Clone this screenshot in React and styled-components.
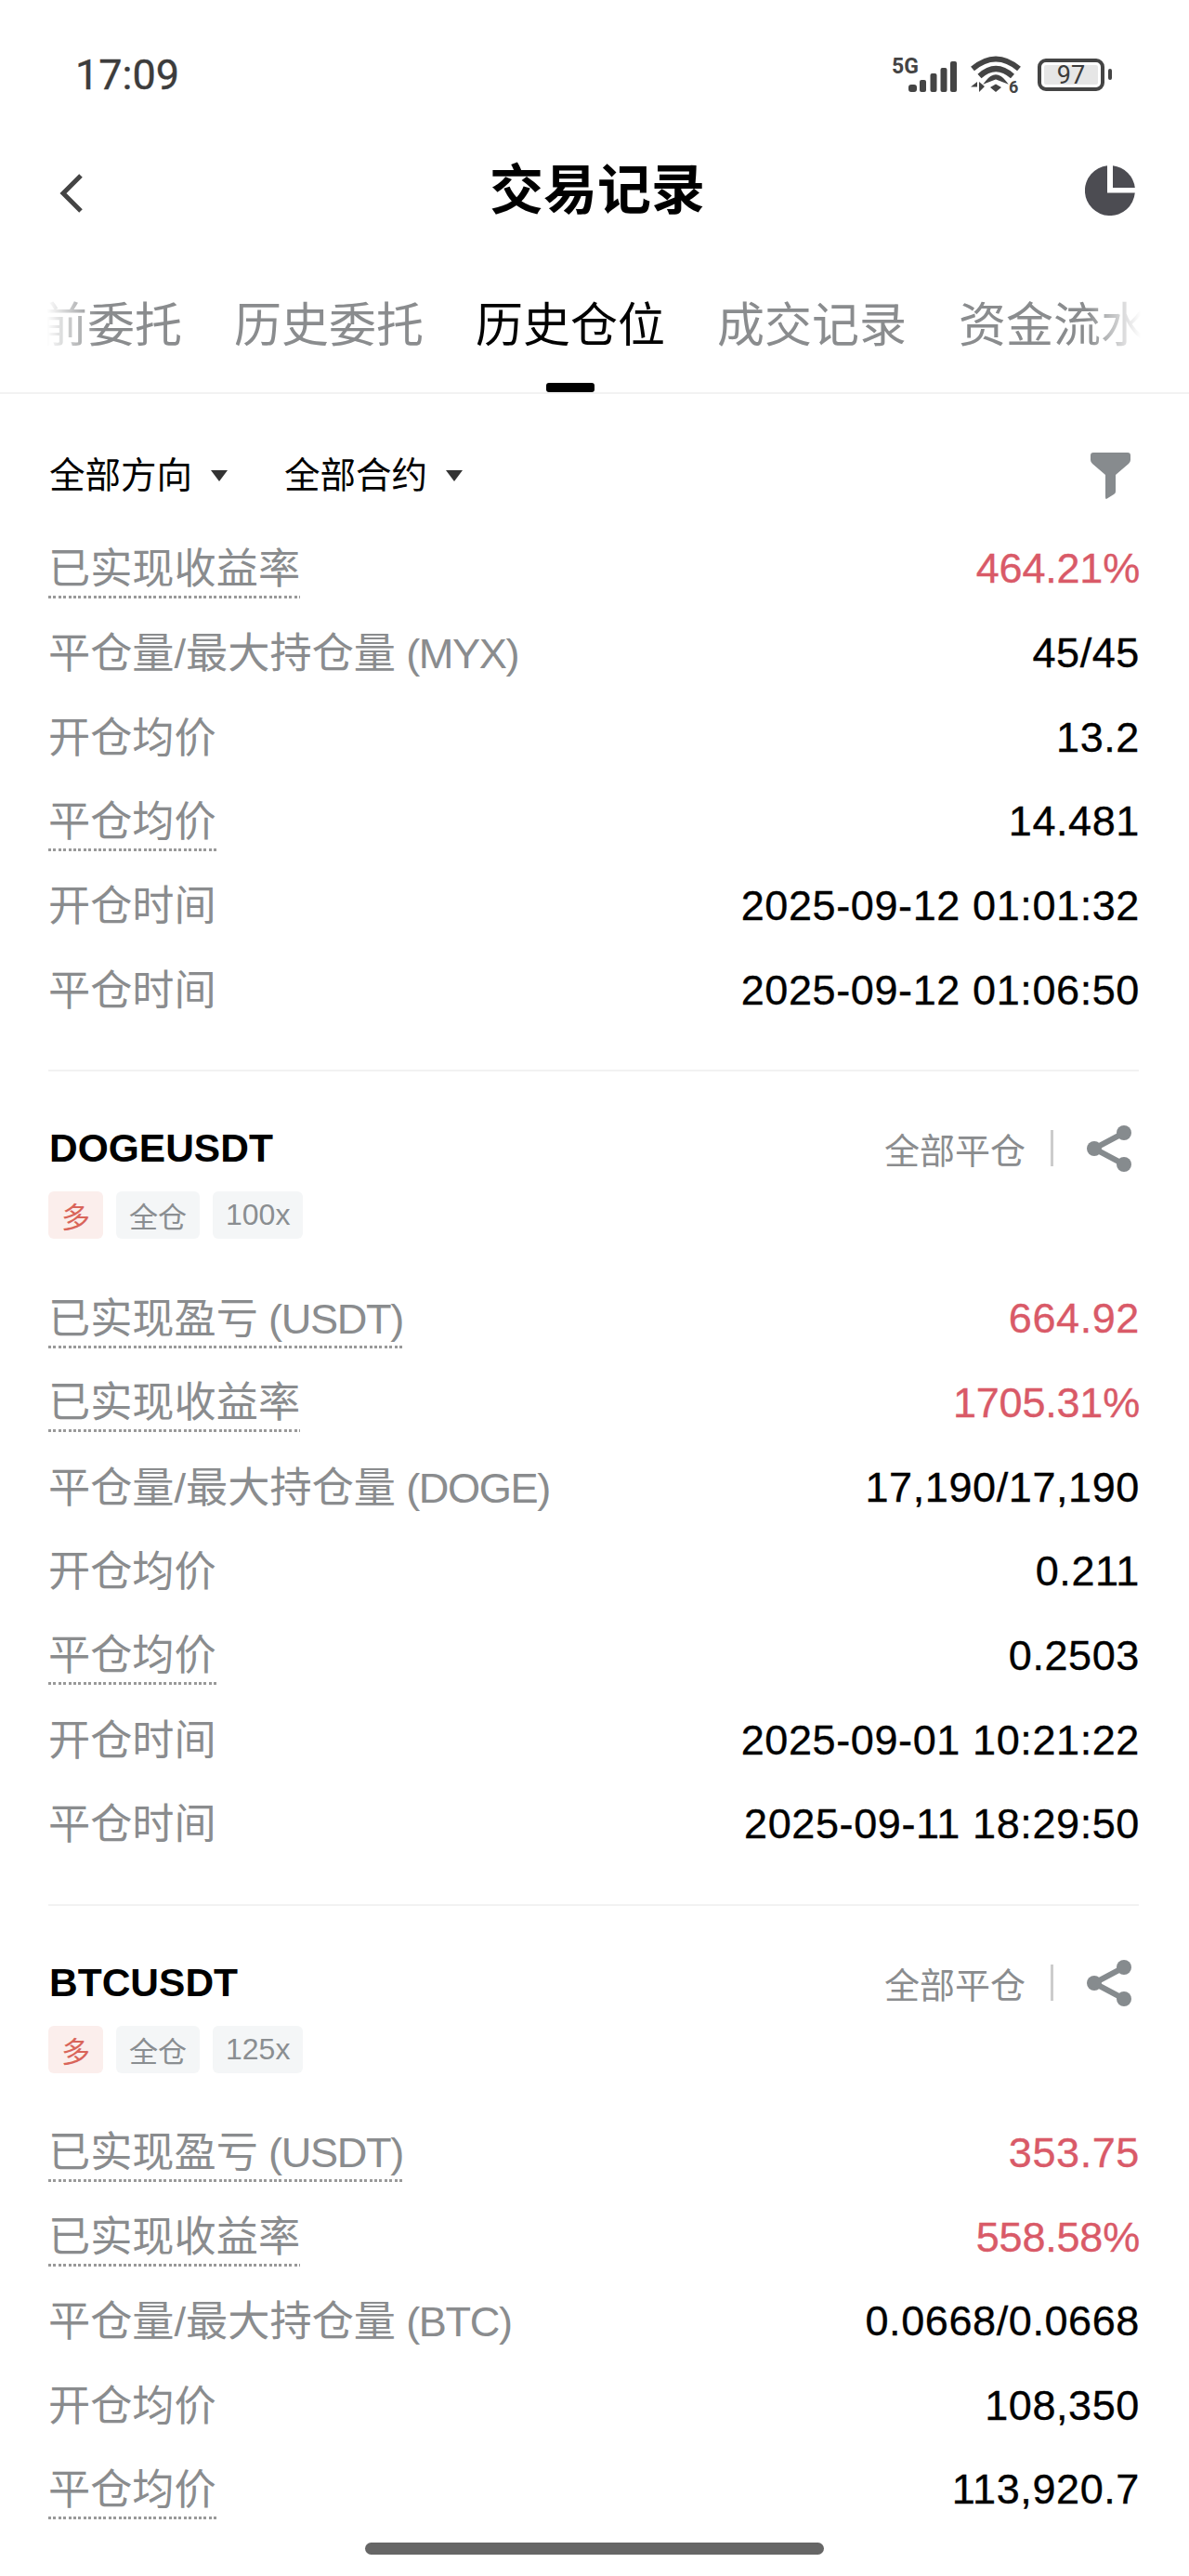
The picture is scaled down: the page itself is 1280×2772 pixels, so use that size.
import React from "react"
import styled, { createGlobalStyle } from "styled-components"

const FONT = `"Liberation Sans", "Noto Sans CJK SC", sans-serif`

const GlobalStyle = createGlobalStyle`
  html, body {
    margin: 0;
    padding: 0;
    background: #fff;
  }
`

const TABS = ["当前委托", "历史委托", "历史仓位", "成交记录", "资金流水"]

const firstRows = [
  { label: "已实现收益率", value: "464.21%", dotted: true, red: true },
  { label: "平仓量/最大持仓量", unit: "(MYX)", value: "45/45" },
  { label: "开仓均价", value: "13.2" },
  { label: "平仓均价", value: "14.481", dotted: true },
  { label: "开仓时间", value: "2025-09-12 01:01:32" },
  { label: "平仓时间", value: "2025-09-12 01:06:50" },
]

const positions = [
  {
    symbol: "DOGEUSDT",
    leverage: "100x",
    rows: [
      { label: "已实现盈亏", unit: "(USDT)", value: "664.92", dotted: true, red: true },
      { label: "已实现收益率", value: "1705.31%", dotted: true, red: true },
      { label: "平仓量/最大持仓量", unit: "(DOGE)", value: "17,190/17,190" },
      { label: "开仓均价", value: "0.211" },
      { label: "平仓均价", value: "0.2503", dotted: true },
      { label: "开仓时间", value: "2025-09-01 10:21:22" },
      { label: "平仓时间", value: "2025-09-11 18:29:50" },
    ],
  },
  {
    symbol: "BTCUSDT",
    leverage: "125x",
    rows: [
      { label: "已实现盈亏", unit: "(USDT)", value: "353.75", dotted: true, red: true },
      { label: "已实现收益率", value: "558.58%", dotted: true, red: true },
      { label: "平仓量/最大持仓量", unit: "(BTC)", value: "0.0668/0.0668" },
      { label: "开仓均价", value: "108,350" },
      { label: "平仓均价", value: "113,920.7", dotted: true },
    ],
  },
]

const SignalIcon = () => (
  <svg width="70" height="37" viewBox="0 0 70 37" fill="#444" overflow="visible">
    <text x="0" y="17" fontFamily="Roboto, sans-serif" fontWeight="700" fontSize="23">5G</text>
    <rect x="18" y="29" width="9" height="8" rx="3" />
    <rect x="30" y="24" width="7" height="13" rx="2" />
    <rect x="41.5" y="17" width="7" height="20" rx="2" />
    <rect x="52.5" y="11" width="7" height="26" rx="2" />
    <rect x="63" y="4" width="7" height="33" rx="2" />
  </svg>
)

const WifiIcon = () => (
  <svg width="54" height="40" viewBox="0 0 54 40" fill="#444" overflow="visible">
    <path d="M2 14Q27 -7 52 14" fill="none" stroke="#444" strokeWidth="6" />
    <path d="M9.5 22Q27 6 45 22" fill="none" stroke="#444" strokeWidth="6" />
    <path d="M17 28Q27 15 37 28L27 24Z" stroke="#444" strokeWidth="2.5" />
    <path d="M21 34L27 30.5L33 34L27 39Z" />
    <path d="M0 33.5L7 33.5L7 28ZM9 28L9 39L15 33Z" />
    <text x="41" y="40" fontFamily="Roboto, sans-serif" fontWeight="700" fontSize="18">6</text>
  </svg>
)

const PieIcon = () => (
  <svg width="54" height="54" viewBox="0 0 54 54" fill="#4c4c52">
    <path d="M24 0.2A27 27 0 1 0 53.8 29.5L24 29.5Z" />
    <path d="M30 0.2A27 27 0 0 1 53.8 24L30 24Z" />
  </svg>
)

const BackIcon = () => (
  <svg width="26" height="42" viewBox="0 0 26 42" fill="none">
    <path d="M23 2L4 21L23 40" stroke="#444" strokeWidth="5" />
  </svg>
)

const FilterIcon = () => (
  <svg width="43" height="50" viewBox="0 0 43 50" fill="#878b8e">
    <path d="M3 0H40Q43 0 43 3V8Q43 10 41 12L27 24V42Q27 44 25 45L17 50Q16 50 16 48V24L2 12Q0 10 0 8V3Q0 0 3 0Z" />
  </svg>
)

const ShareIcon = () => (
  <svg width="48" height="50" viewBox="0 0 48 50" fill="#868b8e">
    <path d="M8 25L40 8M8 25L40 42" stroke="#868b8e" strokeWidth="6" />
    <circle cx="8" cy="25" r="8" />
    <circle cx="40" cy="8" r="8" />
    <circle cx="40" cy="42" r="8" />
  </svg>
)

const Row = ({ label, unit, value, dotted, red }) => (
  <RowWrap>
    <Label $dotted={dotted}>
      {label}
      {unit && <Unit> {unit}</Unit>}
    </Label>
    <Value $red={red} $tight={value.endsWith("%")}>
      {value}
    </Value>
  </RowWrap>
)

const App = () => {
  return (
    <Page>
      <GlobalStyle />
      <StatusBar>
        <Clock>17:09</Clock>
        <StatusIcons>
          <SignalIcon />
          <WifiIcon />
          <Battery>
            <BatteryBody>
              <BatteryLevel>97</BatteryLevel>
            </BatteryBody>
            <BatteryCap />
          </Battery>
        </StatusIcons>
      </StatusBar>

      <Nav>
        <BackButton>
          <BackIcon />
        </BackButton>
        <Title>交易记录</Title>
        <NavRight>
          <PieIcon />
        </NavRight>
      </Nav>

      <TabBar>
        <TabScroller>
          <TabList>
            {TABS.map((tab) => (
              <Tab key={tab} $active={tab === "历史仓位"}>
                {tab}
              </Tab>
            ))}
          </TabList>
        </TabScroller>
      </TabBar>

      <Filters>
        <FilterGroup>
          <Dropdown>
            全部方向
            <Caret />
          </Dropdown>
          <Dropdown>
            全部合约
            <Caret />
          </Dropdown>
        </FilterGroup>
        <FilterIcon />
      </Filters>

      <Rows>
        {firstRows.map((row) => (
          <Row key={row.label} {...row} />
        ))}
      </Rows>

      {positions.map((position) => (
        <Position key={position.symbol}>
          <CardHead>
            <CardTop>
              <Symbol>{position.symbol}</Symbol>
              <CardActions>
                <CloseAll>全部平仓</CloseAll>
                <ActionDivider />
                <ShareIcon />
              </CardActions>
            </CardTop>
            <Tags>
              <Tag $long>多</Tag>
              <Tag>全仓</Tag>
              <Tag $latin>{position.leverage}</Tag>
            </Tags>
          </CardHead>
          <Rows>
            {position.rows.map((row) => (
              <Row key={row.label} {...row} />
            ))}
          </Rows>
        </Position>
      ))}

      <HomeBar />
    </Page>
  )
}

export default App

const Page = styled.div`
  position: relative;
  width: 1280px;
  height: 2772px;
  overflow: hidden;
  background: #fff;
  font-family: ${FONT};
`

const StatusBar = styled.div`
  height: 160px;
  padding: 0 83px 0 81px;
  box-sizing: border-box;
  display: flex;
  align-items: center;
  justify-content: space-between;
`

const Clock = styled.div`
  font-family: Roboto, sans-serif;
  font-size: 45px;
  color: #3c3c3c;
  -webkit-text-stroke: 0.4px currentColor;
  line-height: 1;
`

const StatusIcons = styled.div`
  display: flex;
  align-items: center;
  gap: 15px;
`

const Battery = styled.div`
  display: flex;
  align-items: center;
  gap: 4px;
  margin-left: 3px;
`

const BatteryBody = styled.div`
  width: 72px;
  height: 35px;
  box-sizing: border-box;
  padding: 3px;
  border: 4px solid #444;
  border-radius: 9px;
`

const BatteryLevel = styled.div`
  height: 100%;
  background: #e6e6e6;
  border-radius: 2px;
  text-align: center;
  font-family: Roboto, sans-serif;
  font-size: 27px;
  line-height: 22px;
  color: #3c3c3c;
`

const BatteryCap = styled.div`
  width: 4px;
  height: 12px;
  background: #444;
  border-radius: 2px;
`

const Nav = styled.div`
  height: 90px;
  padding: 0 58px 0 64px;
  display: grid;
  grid-template-columns: 1fr auto 1fr;
  align-items: center;
`

const BackButton = styled.div`
  display: flex;
  padding-top: 6px;
`

const NavRight = styled.div`
  display: flex;
  justify-content: flex-end;
`

const Title = styled.h1`
  margin: 0;
  font-size: 58px;
  font-weight: 700;
  color: #000;
  line-height: 90px;
`

const TabBar = styled.div`
  height: 174px;
  box-sizing: border-box;
  padding-top: 67px;
  border-bottom: 2px solid #f2f2f2;
`

const TabScroller = styled.div`
  overflow: hidden;
  mask-image: linear-gradient(to right, transparent 50px, #000 105px, #000 1170px, transparent 1228px);
`

const TabList = styled.div`
  display: flex;
  gap: 56px;
  margin-left: -8px;
  width: max-content;
`

const Tab = styled.div`
  position: relative;
  font-size: 51px;
  line-height: 68px;
  height: 105px;
  white-space: nowrap;
  color: ${(props) => (props.$active ? "#000" : "#8a8c8e")};

  &::after {
    content: "";
    display: ${(props) => (props.$active ? "block" : "none")};
    position: absolute;
    left: 76px;
    bottom: 0;
    width: 52px;
    height: 10px;
    border-radius: 3px;
    background: #000;
  }
`

const Filters = styled.div`
  padding: 58px 63px 25px 53px;
  display: flex;
  align-items: center;
  justify-content: space-between;
`

const FilterGroup = styled.div`
  display: flex;
  gap: 61px;
`

const Dropdown = styled.div`
  display: flex;
  align-items: center;
  gap: 20px;
  font-size: 38.5px;
  line-height: 60px;
  color: #000;
`

const Caret = styled.span`
  width: 0;
  height: 0;
  border-left: 9px solid transparent;
  border-right: 9px solid transparent;
  border-top: 12px solid #333;
`

const Rows = styled.div`
  display: flex;
  flex-direction: column;
  padding: 0 53px 0 52px;
`

const RowWrap = styled.div`
  height: 90.67px;
  box-sizing: border-box;
  padding-top: 2px;
  display: flex;
  align-items: center;
  justify-content: space-between;
`

const Label = styled.span`
  font-size: 45.2px;
  line-height: 52px;
  color: #8a8c8e;
  white-space: nowrap;
  ${(props) =>
    props.$dotted &&
    `
    margin-top: 4px;
    padding-bottom: 5px;
    background: repeating-linear-gradient(to right, #999 0 3px, transparent 3px 5.4px) left bottom / 100% 3px no-repeat;
  `}
`

const Unit = styled.span`
  letter-spacing: -1.4px;
`

const Value = styled.span`
  margin-top: -2px;
  font-size: 45px;
  letter-spacing: ${(props) => (props.$tight ? "-0.2px" : "0.6px")};
  -webkit-text-stroke: 0.35px currentColor;
  color: ${(props) => (props.$red ? "#d95a68" : "#000")};
  white-space: nowrap;
`

const Position = styled.section`
  margin-top: 40px;
`

const CardHead = styled.div`
  margin: 0 54px 0 52px;
  padding: 53px 0 41px;
  border-top: 2px solid #f2f2f2;
`

const CardTop = styled.div`
  height: 60px;
  display: flex;
  align-items: center;
  justify-content: space-between;
`

const Symbol = styled.div`
  padding-left: 1px;
  font-size: 42.5px;
  font-weight: 700;
  color: #000;
`

const CardActions = styled.div`
  display: flex;
  align-items: center;
  padding-right: 8px;
`

const CloseAll = styled.span`
  font-size: 38px;
  color: #8a8c8e;
`

const ActionDivider = styled.span`
  width: 3px;
  height: 39px;
  margin: 0 36px 0 27px;
  background: #ccc;
`

const Tags = styled.div`
  display: flex;
  gap: 14px;
  margin-top: 16px;
`

const Tag = styled.span`
  height: 51px;
  padding: 0 14px;
  box-sizing: border-box;
  display: flex;
  align-items: center;
  border-radius: 6px;
  font-size: ${(props) => (props.$latin ? "32px" : "31px")};
  color: ${(props) => (props.$long ? "#d9655a" : "#8a8e91")};
  background: ${(props) => (props.$long ? "#fbeeec" : "#f4f6f7")};
`

const HomeBar = styled.div`
  position: absolute;
  left: 393px;
  top: 2736px;
  width: 494px;
  height: 13px;
  border-radius: 7px;
  background: #666;
`
